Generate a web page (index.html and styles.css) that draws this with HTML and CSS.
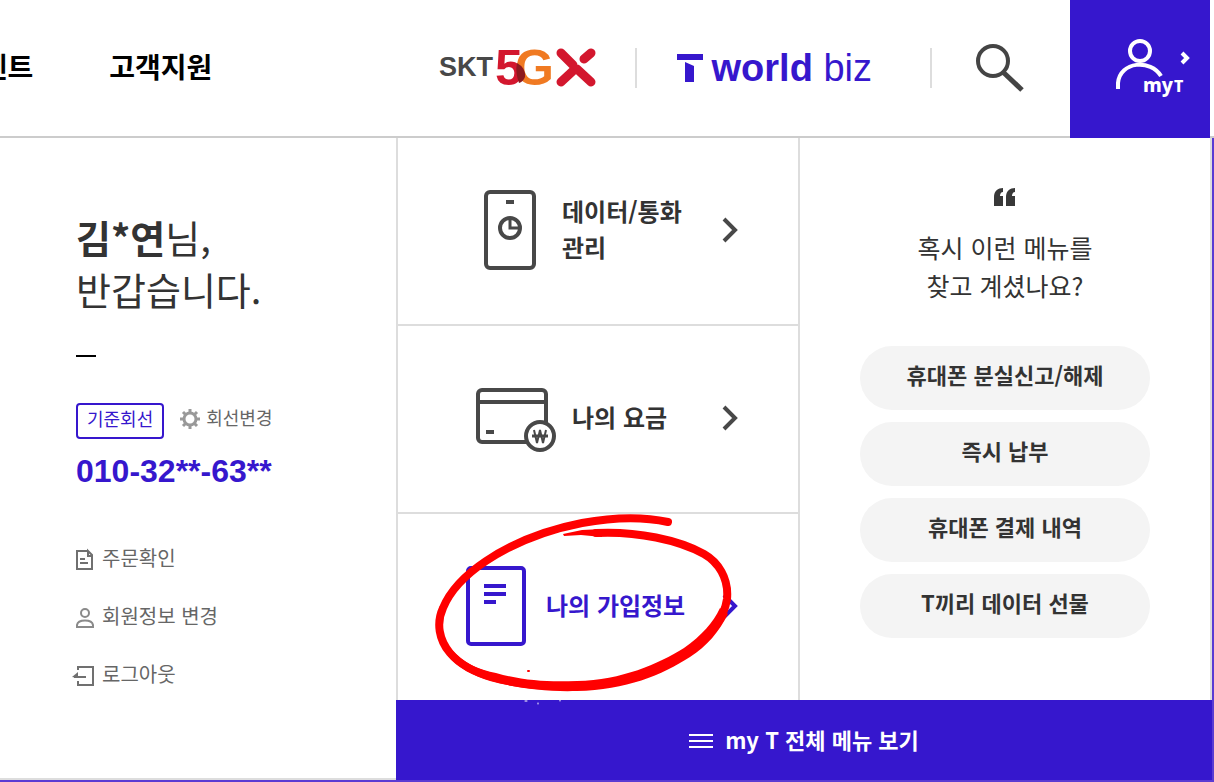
FILE: index.html
```
<!DOCTYPE html>
<html lang="ko">
<head>
    <meta charset="UTF-8">
    <meta name="viewport" content="width=device-width, initial-scale=1.0">
    <title>T world - my T</title>
    <link rel="stylesheet" href="styles.css">
</head>
<body>
    <header class="header">
        <nav class="main-nav">
            <a href="#">이벤트</a>
            <a href="#">고객지원</a>
        </nav>
        <div class="utils">
            <a href="#" class="logo-5gx" aria-label="SKT 5GX">
                <svg width="158" height="40" viewBox="0 0 158 40">
                    <text class="skt" x="0" y="28">SKT</text>
                    <text class="five" x="56" y="37">5</text>
                    <text class="gee" x="76" y="37">G</text>
                    <path d="M78 15 Q87 20 86 29 Q84 34 80 35 Q76 24 78 15 Z" fill="#8c1a1f"/>
                    <g stroke="#d3172e" stroke-width="9" stroke-linecap="round">
                        <path d="M122 5 L134 17 M152 5 L145 11 M122 34 L136 21 M152 34 L138 21"/>
                        <path d="M134 17 L141 23" stroke-width="5"/>
                    </g>
                </svg>
            </a>
            <a href="#" class="logo-biz" aria-label="T world biz">
                <svg width="26" height="30" viewBox="0 0 26 30">
                    <rect width="26" height="6" y="1"/>
                    <path d="M8 9 L17 13 V29 H8 Z"/>
                </svg>
                <span><b>world</b> biz</span>
            </a>
            <button type="button" class="search-btn" aria-label="검색">
                <svg width="48" height="48" viewBox="0 0 48 48" fill="none" stroke="#444" stroke-width="4">
                    <circle cx="17" cy="17" r="15"/>
                    <path d="M27 28 L46 46" stroke-width="5"/>
                </svg>
            </button>
            <button type="button" class="myt-btn" aria-label="my T">
                <svg width="76" height="62" viewBox="0 0 76 62" fill="none" stroke="#fff" stroke-width="4">
                    <circle cx="24" cy="14" r="10"/>
                    <path d="M2 52 V46 C4 24 35 22 45 39"/>
                    <path d="M66 16 L71 21 L66 26"/>
                    <text x="27" y="55">my</text>
                    <text x="58" y="55" class="small-t">T</text>
                </svg>
            </button>
        </div>
    </header>

    <main class="stage">
        <div class="panel">
            <section class="profile">
                <h1><b>김*연</b>님,<br>반갑습니다.</h1>
                <div class="dash"></div>
                <div class="line-row">
                    <span class="badge">기준회선</span>
                    <a href="#" class="line-change">
                        <svg width="20" height="20" viewBox="0 0 20 20" fill="none" stroke="#999">
                            <circle cx="10" cy="10" r="6" stroke-width="3"/>
                            <path d="M10 0 V4 M10 16 V20 M0 10 H4 M16 10 H20 M3 3 L6 6 M14 14 L17 17 M17 3 L14 6 M3 17 L6 14" stroke-width="3"/>
                        </svg>
                        <span>회선변경</span>
                    </a>
                </div>
                <p class="phone">010-32**-63**</p>
                <ul class="links">
                    <li><a href="#">
                        <svg width="20" height="20" viewBox="0 0 20 20" fill="none" stroke="#707070" stroke-width="2">
                            <path d="M11 1 H1 V19 H16 V5 L12 1 V6 H16 M4 9 H9 M4 13 H12"/>
                        </svg>
                        <span>주문확인</span></a></li>
                    <li><a href="#">
                        <svg width="20" height="20" viewBox="0 0 20 20" fill="none" stroke="#8a8a8a" stroke-width="2">
                            <circle cx="9" cy="5" r="4"/>
                            <path d="M1 19 V17 C2 11 16 11 17 17 V19 Z"/>
                        </svg>
                        <span>회원정보 변경</span></a></li>
                    <li><a href="#">
                        <svg width="20" height="20" viewBox="0 0 20 20" fill="none" stroke="#707070" stroke-width="2">
                            <path d="M2 4 V1 H17 V19 H2 V15"/>
                            <path d="M-2 11 H10"/>
                            <path d="M-4 11 L2 6 V12 Z" fill="#707070" stroke="none"/>
                        </svg>
                        <span>로그아웃</span></a></li>
                </ul>
            </section>

            <nav class="menu">
                <a href="#" class="menu-item menu-data">
                    <svg width="52" height="80" viewBox="0 0 52 80" fill="none" stroke="#484848" stroke-width="4">
                        <rect x="2" y="2" width="48" height="76" rx="4"/>
                        <path d="M22 12 H30"/>
                        <circle cx="26" cy="38" r="10"/>
                        <path d="M26 28 V38 H36" stroke-width="3"/>
                    </svg>
                    <span>데이터/통화<br>관리</span>
                    <svg class="arrow" width="16" height="26" viewBox="0 0 16 26"><path d="M2 2 L13 13 L2 24"/></svg>
                </a>
                <a href="#" class="menu-item menu-fee">
                    <svg width="80" height="64" viewBox="0 0 80 60" fill="none" stroke="#484848" stroke-width="4">
                        <rect x="2" y="2" width="68" height="52" rx="4"/>
                        <path d="M2 14 H70 M10 44 H18"/>
                        <circle cx="64" cy="48" r="14" fill="#fff"/>
                        <path d="M56 48 H72" stroke-width="3"/>
                        <path d="M58 42 L61 55 L64 42 L67 55 L70 42" stroke-width="2"/>
                    </svg>
                    <span>나의 요금</span>
                    <svg class="arrow" width="16" height="26" viewBox="0 0 16 26"><path d="M2 2 L13 13 L2 24"/></svg>
                </a>
                <a href="#" class="menu-item menu-info active">
                    <svg width="60" height="80" viewBox="0 0 60 80" fill="none" stroke="#3617cd" stroke-width="4">
                        <rect x="2" y="2" width="56" height="76" rx="3"/>
                        <path d="M18 20 H40 M18 28 H40 M18 36 H30"/>
                    </svg>
                    <span>나의 가입정보</span>
                    <svg class="arrow" width="16" height="26" viewBox="0 0 16 26"><path d="M2 2 L13 13 L2 24"/></svg>
                    <!-- hand drawn marker -->
                    <svg class="marker" width="298" height="182" viewBox="0 0 298 182" fill="none" stroke="#f00" stroke-linecap="round" stroke-linejoin="round">
                        <path stroke-width="8" d="M232 8 C205 2 178 3 146 9 C110 16 77 29 50 47 C29 61 14 77 7 94 C0 109 3 126 14 139 C25 152 41 159 56 163 C82 171 110 173 141 172 C188 171 224 157 251 139 C271 125 288 106 291 85 C293 64 282 48 268 40 C243 26 201 17 160 19"/>
                        <path fill="#f00" stroke="none" d="M14 134 C28 150 44 156 60 159 C88 167 112 168 141 167 C186 166 222 150 248 134 C266 121 277 109 284 94 L292 100 C283 118 271 132 254 143 C226 161 190 176 141 177 C110 178 80 174 54 167 C38 162 22 154 12 142 Z"/>
                        <path fill="#f00" stroke="none" d="M127 20 L146 16 L166 15 V23 L145 21 L128 22 Z"/>
                        <path stroke-width="2" d="M92 157 H93"/>
                        <path stroke="#fff" stroke-width="1" d="M89 187 H91 M102 189 V190 M124 186 V187"/>
                    </svg>
                </a>
            </nav>

            <section class="suggest">
                <svg width="22" height="18" viewBox="0 0 22 18" fill="#383838">
                    <path d="M0 18 V9 C0 3 4 0 9 0 V4 C7 4 6 6 6 8 H9 V18 Z M12 18 V9 C12 3 16 0 21 0 V4 C19 4 18 6 18 8 H21 V18 Z"/>
                </svg>
                <p>혹시 이런 메뉴를<br>찾고 계셨나요?</p>
                <ul>
                    <li><a href="#">휴대폰 분실신고/해제</a></li>
                    <li><a href="#">즉시 납부</a></li>
                    <li><a href="#">휴대폰 결제 내역</a></li>
                    <li><a href="#">T끼리 데이터 선물</a></li>
                </ul>
            </section>

            <a href="#" class="all-menu">
                <svg width="24" height="16" viewBox="0 0 24 16" stroke="#fff" stroke-width="2">
                    <path d="M0 2 H24 M0 8 H24 M0 14 H24"/>
                </svg>
                <span>my T 전체 메뉴 보기</span>
            </a>
        </div>
    </main>
</body>
</html>
```
FILE: styles.css
```
* {
    box-sizing: border-box;
}
body {
    margin: 0;
    min-height: 100vh;
    display: flex;
    flex-direction: column;
    overflow-x: hidden;
    font-family: "Noto Sans CJK KR", sans-serif;
    color: #333;
    background-color: #fff;
}
a {
    color: inherit;
    text-decoration: none;
}
ul {
    list-style: none;
    margin: 0;
    padding: 0;
}
svg {
    flex-shrink: 0;
    overflow: visible;
}
button {
    border: 0;
    padding: 0;
    background: none;
    cursor: pointer;
}

/* header */
.header {
    display: flex;
    justify-content: space-between;
    height: 138px;
    padding-right: 4px;
    border-bottom: 2px solid #ccc;
}
.main-nav {
    display: flex;
    align-items: center;
    gap: 76px;
    margin-left: -44px;
    padding-bottom: 4px;
    font-size: 28px;
    font-weight: 700;
    color: #000;
    white-space: nowrap;
}
.utils {
    display: flex;
    align-items: center;
}
.logo-5gx,
.logo-biz {
    display: flex;
    align-items: center;
    height: 40px;
    border-right: 2px solid #ddd;
}
.logo-5gx {
    padding-right: 38px;
    margin-right: 40px;
}
.logo-5gx text {
    font-family: "Liberation Sans", sans-serif;
    font-weight: 700;
}
.skt {
    font-size: 27px;
    fill: #484848;
}
.five,
.gee {
    font-size: 50px;
}
.five {
    fill: #d3172e;
}
.gee {
    fill: #f07a22;
}
.logo-biz {
    gap: 9px;
    padding-right: 58px;
    margin-right: 44px;
    font-family: "Liberation Sans", sans-serif;
    font-size: 38px;
    line-height: 40px;
    color: #3617cd;
    fill: #3617cd;
    white-space: nowrap;
}
.search-btn {
    height: 48px;
    margin-right: 46px;
}
.myt-btn {
    align-self: flex-start;
    width: 140px;
    height: 138px;
    padding-left: 28px;
    background-color: #3617cd;
}
.myt-btn text {
    font-family: "Noto Sans", sans-serif;
    font-size: 19px;
    font-weight: 800;
    fill: #fff;
    stroke: none;
}
.myt-btn .small-t {
    font-size: 16px;
}

/* my T panel */
.stage {
    flex: 1;
    display: flex;
    padding: 0 2px 2px 0;
    background-color: #5a3bd3;
}
.panel {
    flex: 1;
    display: grid;
    grid-template-columns: 396fr 402fr 414fr;
    grid-template-rows: 1fr 80px;
    background-color: #fff;
}
.profile {
    grid-row: 1 / 3;
    padding: 73px 20px 0 76px;
    border-bottom: 2px solid #ddd;
}
.profile h1 {
    margin: 0;
    font-size: 38px;
    font-weight: 400;
    line-height: 52px;
}
.dash {
    width: 20px;
    height: 2px;
    margin: 40px 0 46px;
    background-color: #000;
}
.line-row {
    display: flex;
    gap: 16px;
    font-size: 18px;
}
.badge {
    height: 36px;
    padding: 0 9px;
    border: 2px solid #3617cd;
    border-radius: 4px;
    line-height: 26px;
    color: #3617cd;
}
.line-change {
    display: flex;
    align-items: center;
    gap: 6px;
    height: 32px;
    color: #666;
}
.line-change span,
.links span,
.all-menu span {
    padding-bottom: 4px;
}
.phone {
    margin: 12px 0 0;
    font-family: "Liberation Sans", sans-serif;
    font-size: 32px;
    font-weight: 700;
    line-height: 40px;
    color: #3617cd;
}
.links {
    display: grid;
    gap: 28px;
    margin-top: 54px;
    font-size: 20px;
    line-height: 26px;
    color: #666;
}
.links a {
    display: flex;
    align-items: center;
    gap: 6px;
}

/* menu column */
.menu {
    display: grid;
    grid-template-rows: repeat(3, 1fr);
    gap: 2px;
    background-color: #ddd;
    border-left: 2px solid #ddd;
}
.menu-item {
    position: relative;
    display: flex;
    align-items: center;
    padding-right: 60px;
    padding-bottom: 2px;
    background-color: #fff;
    font-size: 24px;
    font-weight: 700;
    line-height: 36px;
}
.menu-item span {
    padding-bottom: 3px;
}
.menu-data {
    gap: 26px;
    padding-left: 86px;
}
.menu-fee {
    gap: 16px;
    padding-left: 78px;
}
.menu-info {
    gap: 20px;
    padding-left: 68px;
}
.arrow {
    margin-left: auto;
    fill: none;
    stroke: #484848;
    stroke-width: 4;
}
.active {
    color: #3617cd;
}
.active .arrow {
    stroke: #3617cd;
}
.marker {
    position: absolute;
    top: 0;
    left: 38px;
}

/* suggestions column */
.suggest {
    padding: 50px 60px 20px;
    border: solid #ddd;
    border-width: 0 2px;
    text-align: center;
}
.suggest svg {
    display: block;
    margin: 0 auto;
}
.suggest p {
    margin: 22px 0 42px;
    font-size: 25px;
    line-height: 38px;
}
.suggest ul {
    display: grid;
    gap: 12px;
}
.suggest li a {
    display: block;
    height: 64px;
    border-radius: 32px;
    background-color: #f4f4f4;
    font-size: 22px;
    font-weight: 700;
    line-height: 56px;
}
.all-menu {
    grid-column: 2 / 4;
    display: flex;
    align-items: center;
    justify-content: center;
    gap: 12px;
    padding-top: 2px;
    background-color: #3617cd;
    font-size: 22px;
    font-weight: 700;
    color: #fff;
}
```
